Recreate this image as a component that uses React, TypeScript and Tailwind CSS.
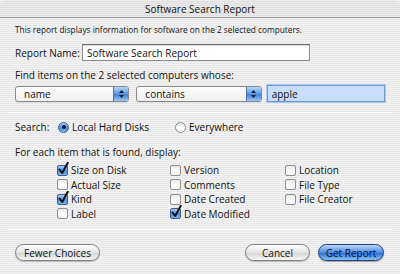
import React from "react";

function Check({ checked }: { checked?: boolean }) {
  return (
    <span className="relative inline-block w-[11px] h-[11px] shrink-0">
      <span
        className={
          checked
            ? "absolute inset-0 rounded-[2px] border border-[#3b5f95] bg-[linear-gradient(to_bottom,#a9cdf5,#4f8fdc_55%,#7fb4ee)]"
            : "absolute inset-0 rounded-[2px] border border-[#8e8e8e] bg-[linear-gradient(to_bottom,#e8e8e8,#ffffff_60%,#f4f4f4)]"
        }
      />
      {checked && (
        <svg className="absolute left-[1px] top-[-3px]" width="11" height="13" viewBox="0 0 11 13">
          <path d="M1.5 7.5 L4.2 11 L9.8 0.8" fill="none" stroke="#111" strokeWidth="2" strokeLinecap="round" strokeLinejoin="round" />
        </svg>
      )}
    </span>
  );
}

function Radio({ on }: { on?: boolean }) {
  return (
    <span
      className={
        on
          ? "relative inline-flex items-center justify-center w-[11px] h-[11px] rounded-full border border-[#3b5f95] bg-[linear-gradient(to_bottom,#a9cdf5,#4f8fdc_55%,#86baf0)] shrink-0"
          : "relative inline-flex items-center justify-center w-[11px] h-[11px] rounded-full border border-[#8e8e8e] bg-[linear-gradient(to_bottom,#e6e6e6,#ffffff_60%,#f4f4f4)] shrink-0"
      }
    >
      {on && <span className="w-[4px] h-[4px] rounded-full bg-[#0b1a33]" />}
    </span>
  );
}

function Popup({ label, w }: { label: string; w: string }) {
  return (
    <div className={`${w} h-[16px] flex rounded-[3px] border border-[#8a8a8a] overflow-hidden bg-[linear-gradient(to_bottom,#fdfdfd,#efefef)] shadow-[0_1px_0_rgba(0,0,0,0.08)]`}>
      <div className="flex-1 flex items-center pl-[8px] text-[10px] leading-none">{label}</div>
      <div className="w-[15px] h-full border-l border-[#4a73b0] bg-[linear-gradient(to_bottom,#b8d6f7,#5a97df_50%,#3f82d6_55%,#9cc6f3)] flex flex-col items-center justify-center gap-[2px]">
        <svg width="5" height="3" viewBox="0 0 5 3"><path d="M0 3 L2.5 0 L5 3Z" fill="#0d1c36" /></svg>
        <svg width="5" height="3" viewBox="0 0 5 3"><path d="M0 0 L2.5 3 L5 0Z" fill="#0d1c36" /></svg>
      </div>
    </div>
  );
}

function Item({ checked, label }: { checked?: boolean; label: string }) {
  return (
    <div className="flex items-center h-[14.5px] gap-[3px] text-[10px] leading-none">
      <Check checked={checked} />
      <span>{label}</span>
    </div>
  );
}

export default function App() {
  return (
    <div className="w-[400px] h-[274px] overflow-hidden font-['Open_Sans',sans-serif] text-[#111] bg-[repeating-linear-gradient(to_bottom,#f2f2f2_0px,#f2f2f2_1px,#e8e8e8_1px,#e8e8e8_2px)]">
      <div className="h-[18px] flex items-center justify-center border-b border-[#9a9a9a] rounded-t-[5px] bg-[repeating-linear-gradient(to_bottom,#ececec_0px,#ececec_1px,#dedede_1px,#dedede_2px)] text-[10px] leading-none">
        Software Search Report
      </div>
      <div className="px-[15px]">
        <div className="mt-[6px] h-[12px] flex items-center text-[8.3px] leading-none">
          This report displays information for software on the 2 selected computers.
        </div>
        <div className="mt-[8px] h-[17px] flex items-center text-[10px] leading-none">
          <span className="w-[67px]">Report Name:</span>
          <div className="w-[228px] h-[17px] flex items-center pl-[4px] bg-white border border-[#8e8e8e] border-t-[#6a6a6a] shadow-[inset_0_1px_1px_rgba(0,0,0,0.15)]">
            Software Search Report
          </div>
        </div>
        <div className="mt-[8px] h-[12px] flex items-center text-[10px] leading-none">
          Find items on the 2 selected computers whose:
        </div>
        <div className="mt-[4px] h-[17px] flex items-center">
          <Popup label="name" w="w-[115px]" />
          <div className="w-[7px]" />
          <Popup label="contains" w="w-[126px]" />
          <div className="w-[5px]" />
          <div className="w-[119px] h-[17px] flex items-center pl-[4px] text-[10px] leading-none bg-[#c6defa] border border-[#6e9ad6] shadow-[0_0_0_1px_#a9c8ef]">
            apple
          </div>
        </div>
        <div className="-mx-[7px] mt-[10px] h-px bg-[#8a8a8a] border-b border-[#ffffff]" />
        <div className="mt-[8px] h-[12px] flex items-center text-[10px] leading-none">
          <span className="w-[43px]">Search:</span>
          <Radio on />
          <span className="ml-[3px] w-[103px]">Local Hard Disks</span>
          <Radio />
          <span className="ml-[3px]">Everywhere</span>
        </div>
        <div className="mt-[13px] h-[12px] flex items-center text-[10px] leading-none">
          For each item that is found, display:
        </div>
        <div className="mt-[5px] pl-[42px] grid grid-cols-[113px_115px_auto]">
          <div>
            <Item checked label="Size on Disk" />
            <Item label="Actual Size" />
            <Item checked label="Kind" />
            <Item label="Label" />
          </div>
          <div>
            <Item label="Version" />
            <Item label="Comments" />
            <Item label="Date Created" />
            <Item checked label="Date Modified" />
          </div>
          <div>
            <Item label="Location" />
            <Item label="File Type" />
            <Item label="File Creator" />
          </div>
        </div>
        <div className="-mx-[7px] mt-[8px] h-px bg-[#8a8a8a] border-b border-[#ffffff]" />
        <div className="mt-[14px] h-[17px] flex items-center text-[10px] leading-none font-medium">
          <div className="w-[85px] h-[17px] flex items-center justify-center rounded-full border border-[#7f7f7f] bg-[linear-gradient(to_bottom,#ffffff,#e4e4e4_50%,#d6d6d6_55%,#f6f6f6)] shadow-[0_1px_1px_rgba(0,0,0,0.2)]">
            Fewer Choices
          </div>
          <div className="flex-1" />
          <div className="w-[65px] h-[17px] flex items-center justify-center rounded-full border border-[#7f7f7f] bg-[linear-gradient(to_bottom,#ffffff,#e4e4e4_50%,#d6d6d6_55%,#f6f6f6)] shadow-[0_1px_1px_rgba(0,0,0,0.2)]">
            Cancel
          </div>
          <div className="w-[8px]" />
          <div className="w-[66px] h-[17px] mr-[1px] flex items-center justify-center rounded-full border border-[#1f3f7a] bg-[linear-gradient(to_bottom,#b9d7fa,#4c8ee0_50%,#2f74d4_55%,#8cc0f4)] shadow-[0_1px_1px_rgba(0,0,0,0.3)] text-[#06122a]">
            Get Report
          </div>
        </div>
      </div>
    </div>
  );
}
